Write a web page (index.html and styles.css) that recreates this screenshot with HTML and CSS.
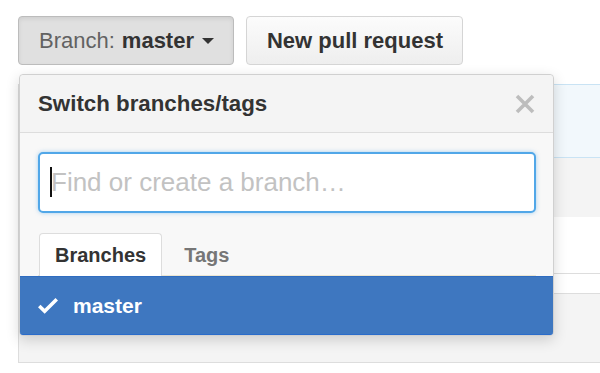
FILE: index.html
```html
<!DOCTYPE html>
<html lang="en">
<head>
    <meta charset="UTF-8">
    <meta name="viewport" content="width=device-width, initial-scale=1.0">
    <title>Switch branches</title>
    <link rel="stylesheet" href="styles.css">
</head>
<body>
    <div class="file-nav">
        <div class="branch-select">
            <button class="btn btn-selected">
                <span class="btn-label">Branch:</span>
                <span class="btn-value">master</span>
                <span class="caret"></span>
            </button>

            <div class="select-menu">
                <div class="select-menu-header">
                    <span class="select-menu-title">Switch branches/tags</span>
                    <svg class="close-icon" width="20" height="20" viewBox="0 0 20 20">
                        <path d="M2 2L18 18M18 2L2 18" stroke="#bdbdbd" stroke-width="3.6" fill="none"/>
                    </svg>
                </div>
                <div class="select-menu-filter">
                    <div class="filter-field">
                        <input type="text" class="filter-input" placeholder="Find or create a branch…">
                    </div>
                    <div class="menu-tabs">
                        <span class="menu-tab selected">Branches</span>
                        <span class="menu-tab">Tags</span>
                    </div>
                </div>
                <div class="select-menu-item selected">
                    <svg class="check-icon" width="20" height="27" viewBox="0 0 12 16">
                        <path d="M12 5l-8 8-4-4 1.5-1.5L4 10l6.5-6.5L12 5z" fill="#fff"/>
                    </svg>
                    <span class="item-text">master</span>
                </div>
            </div>
        </div>
        <button class="btn">New pull request</button>
    </div>

    <div class="repo-box">
        <div class="commit-tease"></div>
        <div class="file-header"></div>
        <div class="file-row tall"></div>
        <div class="file-row short"></div>
        <div class="file-row gray"></div>
    </div>
</body>
</html>
```

FILE: styles.css
```css
html, body {
    margin: 0;
    height: 100%;
    overflow: hidden;
}

body {
    font-family: "Liberation Sans", Arial, sans-serif;
    background-color: white;
    padding: 16px 0 0 18px;
    box-sizing: border-box;
    color: #333;
}

.file-nav {
    display: flex;
    gap: 12px;
}

.branch-select {
    position: relative;
}

.btn {
    height: 49px;
    box-sizing: border-box;
    display: flex;
    align-items: center;
    padding: 0 19px 0 20px;
    font-family: inherit;
    font-size: 22px;
    font-weight: bold;
    color: #333;
    background: linear-gradient(#fcfcfc, #eee);
    border: 1px solid #d5d5d5;
    border-radius: 4px;
}

.btn-selected {
    background: #e0e0e0;
    border-color: #bcbcbc;
    box-shadow: inset 0 2px 4px rgba(0, 0, 0, 0.08);
}

.btn-label {
    font-weight: normal;
    color: #626262;
    margin-right: 7px;
}

.caret {
    width: 0;
    height: 0;
    margin-left: 8px;
    border-left: 6px solid transparent;
    border-right: 6px solid transparent;
    border-top: 6px solid #333;
}

.select-menu {
    position: absolute;
    top: 58px;
    left: 1px;
    width: 535px;
    box-sizing: border-box;
    background-color: #f8f8f8;
    border: 1px solid #d0d0d0;
    border-radius: 4px;
    box-shadow: 0 4px 14px rgba(0, 0, 0, 0.16);
    z-index: 10;
}

.select-menu-header {
    height: 57px;
    display: flex;
    justify-content: space-between;
    align-items: center;
    padding: 0 18px;
    background-color: #f4f4f4;
    border-bottom: 1px solid #ddd;
    border-radius: 4px 4px 0 0;
}

.select-menu-title {
    font-size: 22.3px;
    font-weight: bold;
    color: #333;
}

.select-menu-filter {
    padding: 19px 17px 0 18px;
}

.filter-field {
    position: relative;
}

.filter-field::before {
    content: "";
    position: absolute;
    left: 12px;
    top: 15px;
    width: 2px;
    height: 30px;
    background-color: #111;
}

.filter-input {
    display: block;
    width: 100%;
    height: 61px;
    box-sizing: border-box;
    padding: 0 11px;
    font-family: inherit;
    font-size: 26px;
    border: 2px solid #51a7e8;
    border-radius: 5px;
    background-color: white;
    box-shadow: 0 0 4px rgba(81, 167, 232, 0.5);
    outline: none;
}

.filter-input::placeholder {
    color: #c2c2c2;
}

.menu-tabs {
    display: flex;
    gap: 6px;
    margin-top: 20px;
    padding-left: 1px;
    border-bottom: 1px solid #ece6d2;
}

.menu-tab {
    height: 42px;
    display: flex;
    align-items: center;
    padding: 0 15px;
    font-size: 20px;
    font-weight: bold;
    color: #767676;
    border: 1px solid transparent;
    border-bottom: none;
    border-radius: 4px 4px 0 0;
    margin-bottom: -1px;
}

.menu-tab.selected {
    color: #333;
    background-color: white;
    border-color: #ddd;
}

.select-menu-item {
    height: 59px;
    box-sizing: border-box;
    display: flex;
    align-items: center;
    padding-left: 18px;
    font-size: 21px;
    font-weight: bold;
}

.select-menu-item.selected {
    color: white;
    background-color: #3e77c0;
    border-top: 1px solid #2f6cc0;
    border-bottom: 1px solid #2a6ccb;
    border-radius: 0 0 3px 3px;
}

.check-icon {
    margin-right: 15px;
}

.repo-box {
    margin-top: 19px;
    width: 600px;
    border-left: 1px solid #ddd;
}

.commit-tease {
    height: 72px;
    background-color: #f2f8fc;
    border-top: 1px solid #c9e3f4;
    border-bottom: 1px solid #c9e3f4;
}

.file-header {
    height: 59px;
    background-color: #f4f4f4;
}

.file-row {
    background-color: white;
    border-bottom: 1px solid #ddd;
}

.file-row.tall {
    height: 56px;
}

.file-row.short {
    height: 19px;
}

.file-row.gray {
    height: 68px;
    background-color: #f4f4f4;
}
```
